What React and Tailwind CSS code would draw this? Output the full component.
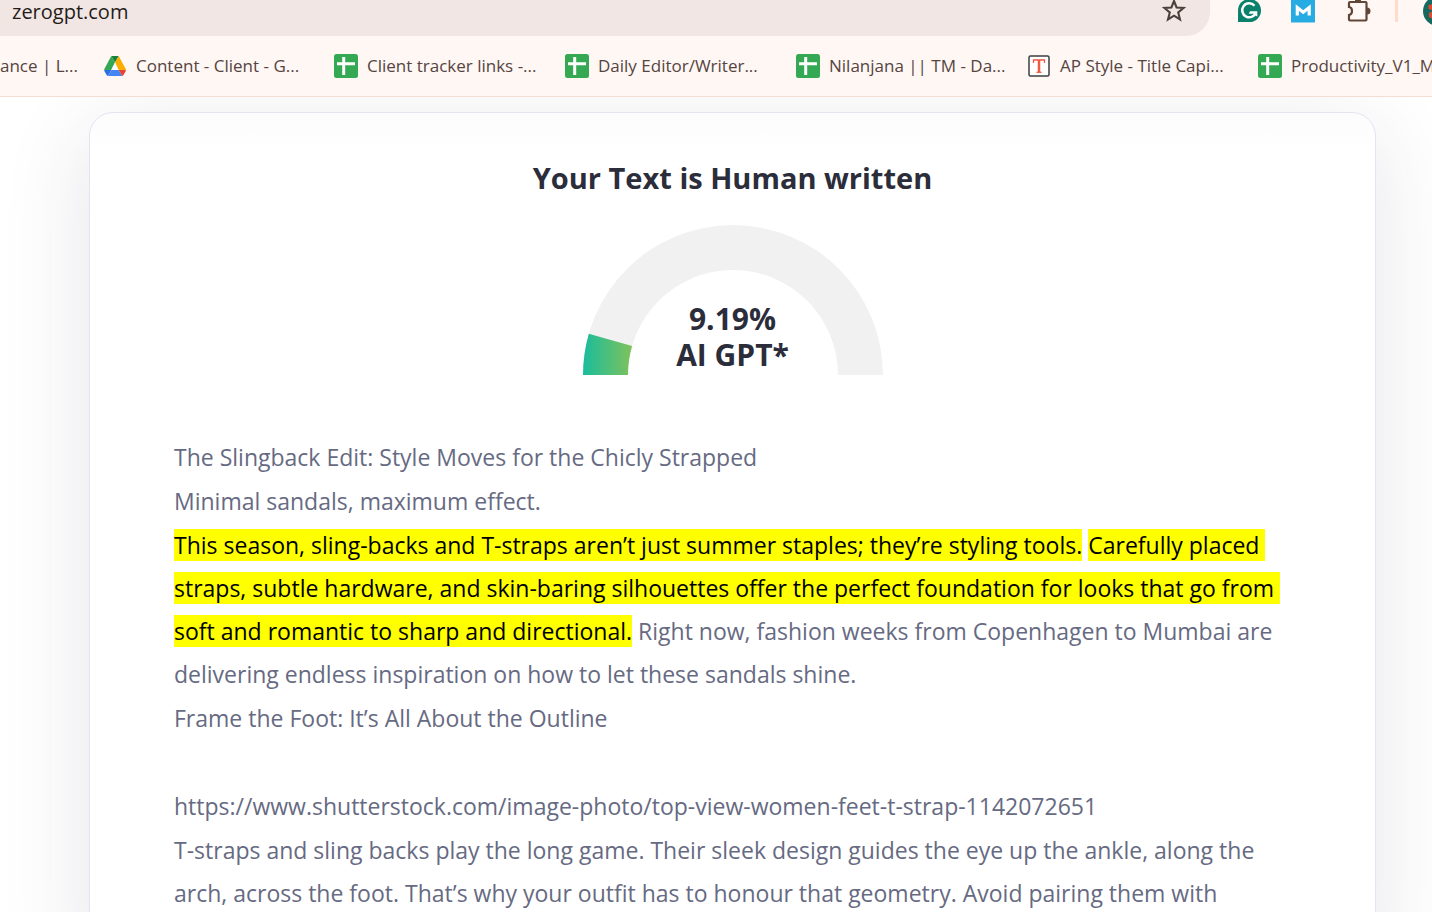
import React from 'react';

const SheetIcon = () => (
  <svg viewBox="0 0 24 24" className="h-6 w-6 shrink-0" aria-hidden="true">
    <rect width="24" height="24" rx="2.5" fill="#34a853" />
    <path d="M3 9.7h18M9.7 3v18" stroke="#fff" strokeWidth="3" />
  </svg>
);

const DriveIcon = () => (
  <svg viewBox="0 0 24 24" className="h-6 w-6 shrink-0" aria-hidden="true">
    <path d="M8.3 2h7.4L12 8.4z" fill="#188038" />
    <path d="M8.3 2 12 8.4 8.2 16H1.2c0-.6.1-1 .4-1.6z" fill="#34a853" />
    <path d="M15.7 2l6.8 12.4c.2.5.4 1 .4 1.6h-7.3L12 8.4z" fill="#fbad00" />
    <path d="M1.2 16h7.3l-3.6 6c-.6-.2-1-.6-1.3-1L1.6 17.6c-.3-.5-.4-1-.4-1.6z" fill="#2a70e0" />
    <path d="M8.5 16h7.1l3.6 6H4.9z" fill="#4285f4" />
    <path d="M15.6 16h7.3c0 .6-.2 1.1-.4 1.6L20.5 21c-.3.5-.7.8-1.3 1z" fill="#ea4335" />
    <path d="M12 8.4 15.6 16H8.3z" fill="#fff" />
  </svg>
);

const TitleIcon = () => (
  <svg viewBox="0 0 24 24" className="h-6 w-6 shrink-0" aria-hidden="true">
    <rect x="2" y="2" width="20" height="20" rx="1.5" fill="#fff" stroke="#3c3f41" strokeWidth="1.5" />
    <path d="M6.5 9V6h11v3" fill="none" stroke="#f05a40" strokeWidth="1.3" />
    <path d="M12 6v12" stroke="#f05a40" strokeWidth="2.5" />
    <path d="M9.5 18.3h5" stroke="#f05a40" strokeWidth="1.3" />
  </svg>
);

const bookmarks = [
  { label: 'Content - Client - G...', Icon: DriveIcon },
  { label: 'Client tracker links -...', Icon: SheetIcon },
  { label: 'Daily Editor/Writer...', Icon: SheetIcon },
  { label: 'Nilanjana || TM - Da...', Icon: SheetIcon },
  { label: 'AP Style - Title Capi...', Icon: TitleIcon },
  { label: 'Productivity_V1_M...', Icon: SheetIcon },
];

function Toolbar() {
  return (
    <div className="flex h-9 items-start overflow-hidden">
      <div className="flex h-9 flex-1 items-start justify-between rounded-br-3xl bg-[#f2e6e4] pr-6 pl-3">
        <input
          aria-label="Address"
          defaultValue="zerogpt.com"
          className="h-7 min-w-0 flex-1 bg-transparent pb-1.5 text-[20px] leading-[22px] text-[#241c1a] outline-none"
        />
        <button aria-label="Bookmark this tab">
          <svg viewBox="0 0 24 24" className="h-6 w-6" fill="none" stroke="#4d403c" strokeWidth="2.1">
            <path d="M12 1l2.6 6.500 7 .5-5.400 4.500 1.800 7-6-3.800-6 3.800 1.800-7L2.400 8l7-.5z" />
          </svg>
        </button>
      </div>
      <div className="flex items-start pl-7">
        <button aria-label="Grammarly" className="mr-[29px]">
          <svg viewBox="0 0 24 24" className="h-6 w-6">
            <path d="M0 22V10.5A11.5 11.5 0 1 1 11.5 22z" fill="#0b806a" />
            <path d="M16.5 5.7A7 7 0 1 0 18 12" fill="none" stroke="#fff" strokeWidth="2.5" />
            <path d="M12 11.200h7.300v5.300l-2.300-1.300v-1.500h-6.200z" fill="#fff" />
          </svg>
        </button>
        <button aria-label="Mailtrack" className="mr-8">
          <svg viewBox="0 0 24 24" className="h-6 w-6">
            <path d="M0 0h24v22.5H0z" fill="#26ace2" />
            <path d="M6.300 15.500V7.500l5.900 4.700 6-4.700v8" fill="none" stroke="#fff" strokeWidth="3.200" />
          </svg>
        </button>
        <button aria-label="Extensions" className="mr-6">
          <svg viewBox="0 0 24 24" className="h-6 w-6">
            <path d="M3 2h15.500a1 1 0 0 1 1 1v16.500a1 1 0 0 1-1 1H3a1 1 0 0 1-1-1v-4.500c4-.5 4-7.500 0-8V3a1 1 0 0 1 1-1z" fill="none" stroke="#5f4637" strokeWidth="2.200" />
            <path d="M20 7.500a3.500 3.500 0 0 1 0 7zM8 1a3 3 0 0 1 6 0z" fill="#5f4637" />
          </svg>
        </button>
        <span className="mr-[25px] h-[22px] w-[3px] bg-[#ffdcc8]" />
        <button aria-label="Profile" className="w-[9px] overflow-hidden">
          <svg viewBox="0 0 30 26" className="h-[26px] w-[30px] max-w-none">
            <circle cx="15" cy="11" r="15" fill="#17685f" />
            <path d="M5.500 5l4-1v6l-4-1zM6 13l4-2v8l-4-2z" fill="#e04b30" />
          </svg>
        </button>
      </div>
    </div>
  );
}

function Bookmarks() {
  return (
    <nav aria-label="Bookmarks" className="flex h-[61px] items-center overflow-hidden border-b border-[#f6dcd2] text-[17px] whitespace-nowrap text-[#55443f]">
      <a href="#" className="w-[103px] shrink-0">ance | L...</a>
      {bookmarks.map(({ label, Icon }) => (
        <a key={label} href="#" className="flex w-[231px] shrink-0 items-center gap-[9px]">
          <Icon />
          <span>{label}</span>
        </a>
      ))}
    </nav>
  );
}

function Gauge({ percent }) {
  // the arc is filled in whole degrees
  const angle = (Math.floor(percent * 1.8) * Math.PI) / 180;
  const x = (r) => 150 - r * Math.cos(angle);
  const y = (r) => 150 - r * Math.sin(angle);

  return (
    <div className="relative mt-[29px] h-[150px] w-[300px]">
      <svg viewBox="0 0 300 150" className="h-full w-full" aria-hidden="true">
        <defs>
          <linearGradient id="score" gradientUnits="userSpaceOnUse" x1="0" y1="0" x2="48" y2="0">
            <stop offset="0" stopColor="#1abc9c" />
            <stop offset="1" stopColor="#7cc25c" />
          </linearGradient>
        </defs>
        <path d="M0 150A150 150 0 0 1 300 150H255A105 105 0 0 0 45 150z" fill="#f1f1f1" />
        <path d={`M0 150A150 150 0 0 1 ${x(150)} ${y(150)}L${x(105)} ${y(105)}A105 105 0 0 0 45 150z`} fill="url(#score)" />
      </svg>
      <p className="absolute inset-x-0 bottom-0.5 text-center text-[30px] leading-9 font-bold">
        {percent}%
        <br />
        AI GPT*
      </p>
    </div>
  );
}

const Mark = ({ children }) => <mark className="bg-[#ffff00] text-black">{children}</mark>;

export default function App() {
  return (
    <div className="h-screen overflow-hidden bg-white font-['Open_Sans','Noto_Sans',sans-serif]">
      <header className="relative bg-[#fff7f4]">
        <Toolbar />
        <Bookmarks />
      </header>
      <main className="mt-[15px] mr-14 ml-[89px] flex flex-col items-center rounded-3xl border border-[#e4e4f2] bg-white bg-linear-to-b from-[#fcfcfc] to-white to-[40px] px-[84px] pt-[47px] pb-12 text-[#2b2d3b] shadow-[0_20px_90px_rgba(40,40,70,0.12)]">
        <h1 className="text-[29px] leading-9 font-bold">Your Text is Human written</h1>
        <Gauge percent={9.19} />
        <article className="mt-[61px] flex w-full flex-col gap-px text-[23px] leading-[43px] text-[#666a82]">
          <p>The Slingback Edit: Style Moves for the Chicly Strapped</p>
          <p>Minimal sandals, maximum effect.</p>
          <p className="whitespace-pre-wrap">
            <Mark>This season, sling-backs and T-straps aren’t just summer staples; they’re styling tools.</Mark>{' '}
            <Mark>Carefully placed straps, subtle hardware, and skin-baring silhouettes offer the perfect foundation for looks that go from soft and romantic to sharp and directional.</Mark>{' '}
            Right now, fashion weeks from Copenhagen to Mumbai are delivering endless inspiration on how to let these sandals shine.
          </p>
          <p>Frame the Foot: It’s All About the Outline</p>
          <p className="h-[43px]" />
          <p>https://www.shutterstock.com/image-photo/top-view-women-feet-t-strap-1142072651</p>
          <p>
            T-straps and sling backs play the long game. Their sleek design guides the eye up the ankle, along the arch, across the foot. That’s why your outfit has to honour that geometry. Avoid pairing them with
          </p>
        </article>
      </main>
    </div>
  );
}
